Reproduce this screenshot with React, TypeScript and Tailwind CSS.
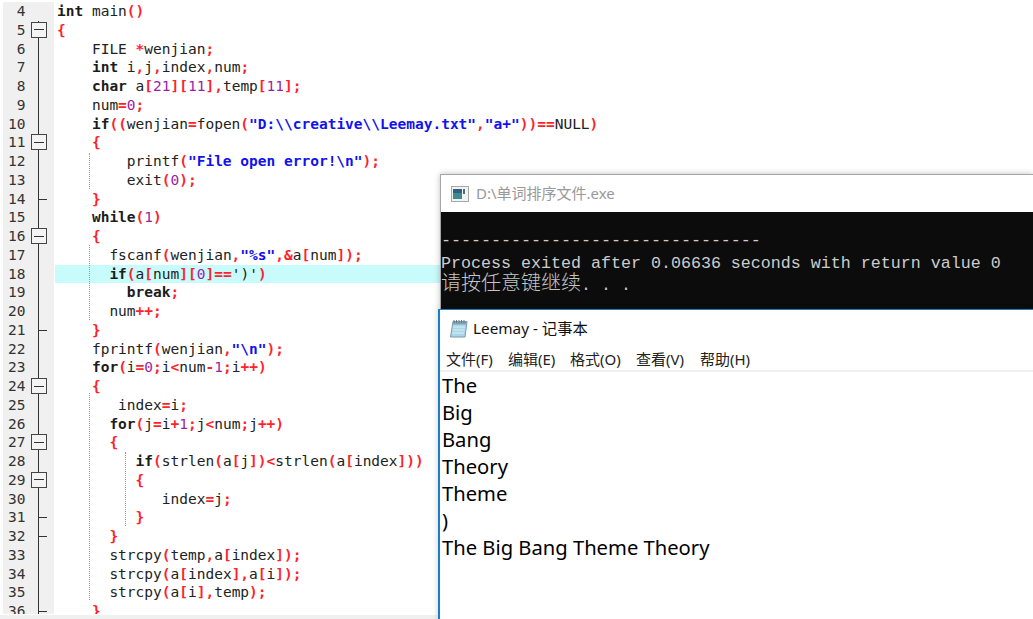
const codeLines = [
  { n: 4, text: 'int main()' },
  { n: 5, text: '{', fold: 'box' },
  { n: 6, text: '    FILE *wenjian;' },
  { n: 7, text: '    int i,j,index,num;' },
  { n: 8, text: '    char a[21][11],temp[11];' },
  { n: 9, text: '    num=0;' },
  { n: 10, text: '    if((wenjian=fopen("D:\\\\creative\\\\Leemay.txt","a+"))==NULL)' },
  { n: 11, text: '    {', fold: 'box' },
  { n: 12, text: '        printf("File open error!\\n");' },
  { n: 13, text: '        exit(0);' },
  { n: 14, text: '    }', fold: 'tick' },
  { n: 15, text: '    while(1)' },
  { n: 16, text: '    {', fold: 'box' },
  { n: 17, text: '      fscanf(wenjian,"%s",&a[num]);' },
  { n: 18, text: "      if(a[num][0]==')')", active: true },
  { n: 19, text: '        break;' },
  { n: 20, text: '      num++;' },
  { n: 21, text: '    }', fold: 'tick' },
  { n: 22, text: '    fprintf(wenjian,"\\n");' },
  { n: 23, text: '    for(i=0;i<num-1;i++)' },
  { n: 24, text: '    {', fold: 'box' },
  { n: 25, text: '       index=i;' },
  { n: 26, text: '      for(j=i+1;j<num;j++)' },
  { n: 27, text: '      {', fold: 'box' },
  { n: 28, text: '         if(strlen(a[j])<strlen(a[index]))' },
  { n: 29, text: '         {', fold: 'box' },
  { n: 30, text: '            index=j;' },
  { n: 31, text: '         }', fold: 'tick' },
  { n: 32, text: '      }', fold: 'tick' },
  { n: 33, text: '      strcpy(temp,a[index]);' },
  { n: 34, text: '      strcpy(a[index],a[i]);' },
  { n: 35, text: '      strcpy(a[i],temp);' },
  { n: 36, text: '    }', fold: 'tick' },
];

const tokenPattern = /("(?:[^"\\]|\\.)*")|('.')|\b(int|char|if|while|for|break)\b|(\b\d+\b)|([^\w\s])/g;

function highlight(text: string) {
  const parts = [];
  let last = 0;
  for (const m of text.matchAll(tokenPattern)) {
    if (m.index > last) parts.push(text.slice(last, m.index));
    let cls = 'font-bold text-[#ff1f2d]';
    if (m[1]) cls = 'font-bold text-[#1212f0]';
    else if (m[2]) cls = 'text-[#222222]';
    else if (m[3]) cls = 'font-bold text-[#1c1c1c]';
    else if (m[4]) cls = 'text-[#9a1fa8]';
    parts.push(<span key={m.index} className={cls}>{m[0]}</span>);
    last = m.index + m[0].length;
  }
  parts.push(text.slice(last));
  return parts;
}

function FoldMark({ fold, first }: { fold?: string; first: boolean }) {
  return (
    <div className="relative h-full w-[17px]">
      {!first && <div className="absolute left-[8px] top-0 bottom-0 w-px bg-[#333333]" />}
      {fold === 'box' && (
        <div className="absolute left-[1px] top-[1px] flex h-[16px] w-[16px] items-center justify-center border border-[#444444] bg-[#f4f4f4]">
          <div className="h-px w-[10px] bg-[#333333]" />
        </div>
      )}
      {fold === 'tick' && <div className="absolute left-[8px] top-[9px] h-px w-[9px] bg-[#333333]" />}
    </div>
  );
}

function Guide({ left, top, height }: { left: string; top: string; height: string }) {
  return <div className={`absolute border-l border-dotted border-[#999999] ${left} ${top} ${height}`} />;
}

function ConsoleIcon() {
  return (
    <svg width="18" height="16" viewBox="0 0 18 16" className="shrink-0">
      <rect x="0.5" y="0.5" width="17" height="15" fill="#f2f2f2" stroke="#a8a8a8" />
      <rect x="2" y="3" width="9" height="10" fill="#3f8a8c" />
      <rect x="2" y="3" width="9" height="4" fill="#2f5f86" />
      <rect x="12" y="3" width="2" height="5" fill="#4a6f7c" />
    </svg>
  );
}

function NotepadIcon() {
  return (
    <svg width="20" height="20" viewBox="0 0 20 20" className="shrink-0">
      <path d="M4 2.5H18L16 18H1.5Z" fill="#a9d6e8" stroke="#7d9aa8" />
      <path d="M4 2.5H18L17.6 5.5H3.6Z" fill="#7fa4b6" />
      <path d="M4 8H16M3.6 11H15.6M3.2 14H15.2" stroke="#d8eef6" />
      <path d="M5 1V4M7.5 1V4M10 1V4M12.5 1V4M15 1V4" stroke="#667a85" />
    </svg>
  );
}

const menus = [
  { label: '文件(F)', cls: 'w-[62px]' },
  { label: '编辑(E)', cls: 'w-[62px]' },
  { label: '格式(O)', cls: 'w-[66px]' },
  { label: '查看(V)', cls: 'w-[64px]' },
  { label: '帮助(H)', cls: 'w-[64px]' },
];

const noteLines = ['The', 'Big', 'Bang', 'Theory', 'Theme', ')', 'The Big Bang Theme Theory'];

export default function App() {
  return (
    <div className="relative h-[619px] w-[1033px] overflow-hidden bg-white">
      {/* editor */}
      <div className="flex h-[615px] overflow-hidden pt-[2px] pb-[1px] pl-[3px] font-['DejaVu_Sans_Mono',monospace] text-[14.5px] text-[#222222]">
        <div className="h-full w-[51px] shrink-0 overflow-hidden bg-[#f0f0f0]">
          {codeLines.map((line, i) => (
            <div key={line.n} className="flex h-[18.75px] items-center">
              <div className="w-[22.5px] text-right leading-[18.75px] text-[#333333]">{line.n}</div>
              <div className="ml-[4px] h-full">
                <FoldMark fold={line.fold} first={i === 0} />
              </div>
            </div>
          ))}
        </div>
        <div className="relative ml-[1px] h-full min-w-0 flex-1 overflow-hidden">
          <Guide left="left-[34px]" top="top-[151px]" height="h-[36px]" />
          <Guide left="left-[34px]" top="top-[243px]" height="h-[75px]" />
          <Guide left="left-[34px]" top="top-[391px]" height="h-[207px]" />
          <Guide left="left-[70px]" top="top-[450px]" height="h-[74px]" />
          {codeLines.map((line) => (
            <div
              key={line.n}
              className={`h-[18.75px] whitespace-pre pl-[2px] leading-[18.75px] ${line.active ? 'bg-[#c8fbfb]' : ''}`}
            >
              {highlight(line.text)}
            </div>
          ))}
        </div>
      </div>
      <div className="h-[4px] bg-[#f0f0f0]" />

      {/* console window */}
      <div className="absolute left-[440px] top-[174px] h-[136px] w-[593px] border-t border-l border-[#a6a6a6] bg-white shadow-[0_0_6px_rgba(0,0,0,0.25)]">
        <div className="flex h-[37px] items-center gap-[7px] pl-[10px] font-['Noto_Sans','Noto_Sans_CJK_SC',sans-serif] text-[15px] text-[#999999]">
          <ConsoleIcon />
          <span>D:\单词排序文件.exe</span>
        </div>
        <div className="h-[98px] bg-[#0c0c0c] pt-[19px] font-['Liberation_Mono','Noto_Sans_CJK_SC',monospace] text-[16.67px] leading-[20px] whitespace-pre text-[#cccccc]">
          <div>--------------------------------</div>
          <div className="mt-[3px]">Process exited after 0.06636 seconds with return value 0</div>
          <div className="-mt-[2px] text-[#c4c4c4]">
            <span className="text-[20px] leading-[20px] font-['Noto_Sans_CJK_SC',sans-serif] font-light">请按任意键继续</span>. . .
          </div>
        </div>
      </div>

      {/* notepad window */}
      <div className="absolute left-[438px] top-[309px] h-[310px] w-[595px] border-t border-l-2 border-[#1a7fc4] bg-white shadow-[0_0_6px_rgba(0,0,0,0.2)] font-['Noto_Sans','Noto_Sans_CJK_SC',sans-serif]">
        <div className="flex h-[37px] items-center gap-[4px] pl-[9px] text-[15.3px] text-[#111111]">
          <NotepadIcon />
          <span>Leemay - 记事本</span>
        </div>
        <div className="flex h-[23px] items-center pt-[1px] pl-[6px] text-[15px] text-[#222222]">
          {menus.map((m) => (
            <span key={m.label} className={m.cls}>{m.label}</span>
          ))}
        </div>
        <div className="h-[2px] bg-[#f0f0f0]" />
        <div className="pl-[2px] text-[20.2px] leading-[27px] text-black">
          {noteLines.map((t, i) => (
            <div key={i}>{t}</div>
          ))}
        </div>
      </div>
    </div>
  );
}
